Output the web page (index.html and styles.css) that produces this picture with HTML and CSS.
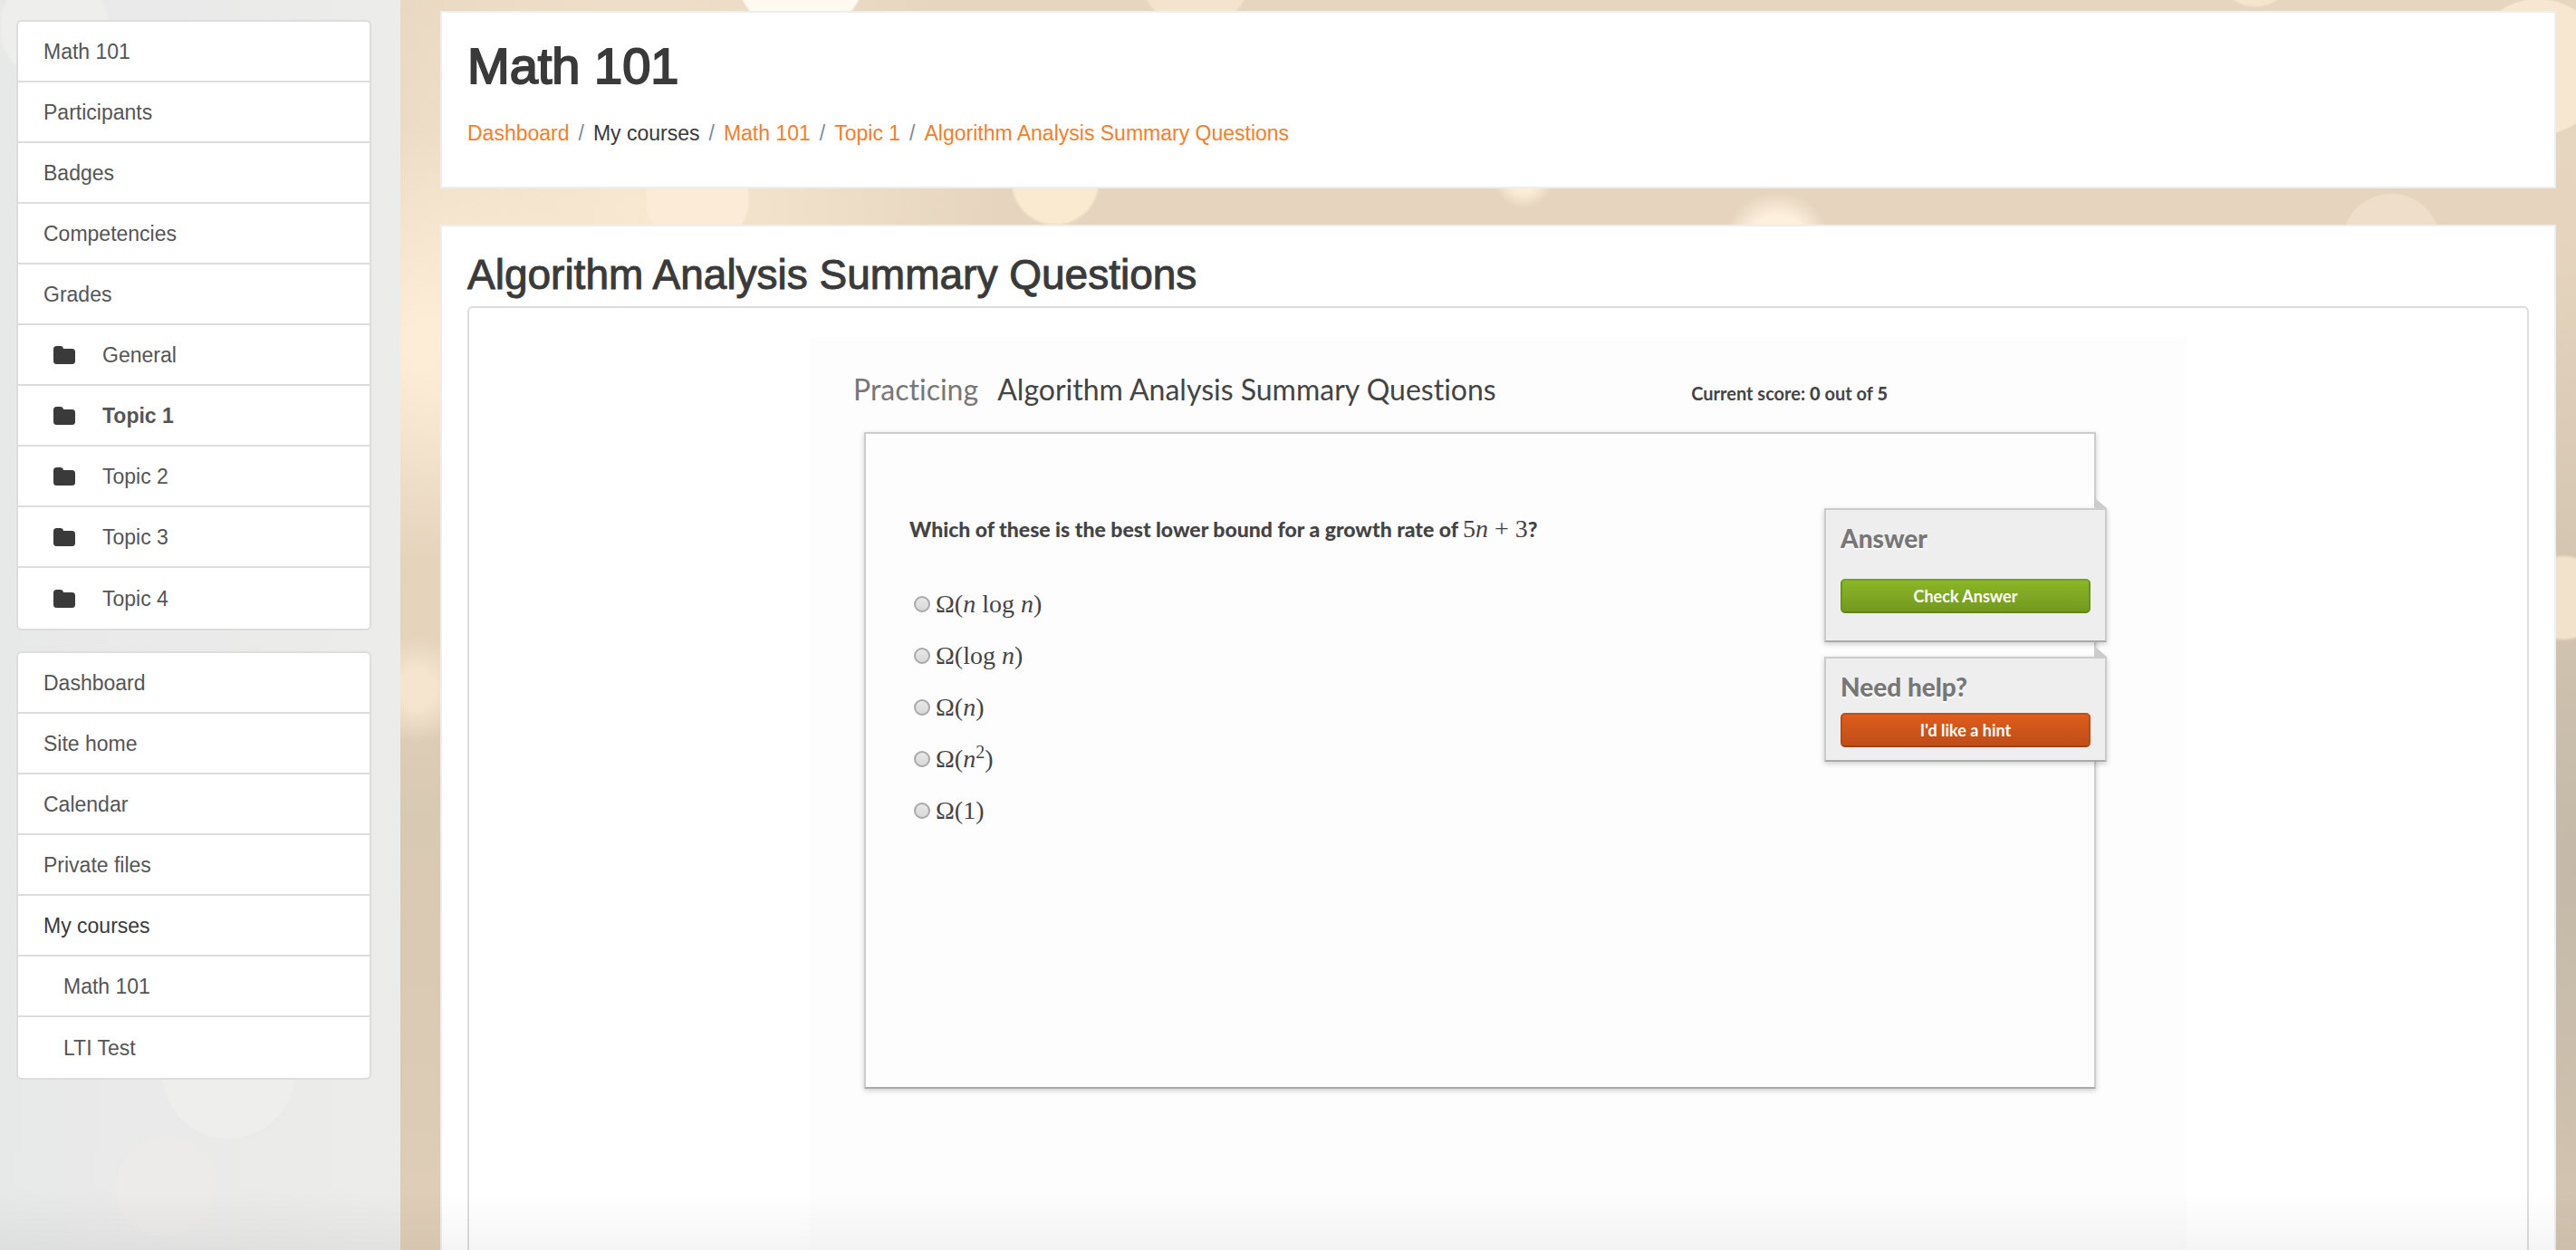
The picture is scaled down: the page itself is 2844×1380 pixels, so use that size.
FILE: index.html
```html
<!DOCTYPE html>
<html lang="en">
<head>
    <meta charset="UTF-8">
    <meta name="viewport" content="width=device-width, initial-scale=1.0">
    <title>Algorithm Analysis Summary Questions</title>
    <link rel="stylesheet" href="styles.css">
</head>
<body>
    <svg class="sprite" aria-hidden="true">
        <symbol id="folder" viewBox="0 0 24 20">
            <path d="M3.500 0h4A3.500 3.500 0 0 1 11 3h9.500A3.500 3.500 0 0 1 24 6.500v10a3.500 3.500 0 0 1-3.500 3.500h-17A3.500 3.500 0 0 1 0 16.500v-13A3.500 3.500 0 0 1 3.500 0z"/>
        </symbol>
    </svg>

    <!-- Nav drawer -->
    <aside class="drawer">
        <nav class="list-group" aria-label="Course">
            <a href="#">Math 101</a>
            <a href="#">Participants</a>
            <a href="#">Badges</a>
            <a href="#">Competencies</a>
            <a href="#">Grades</a>
            <a href="#" class="section"><svg class="icon"><use href="#folder"/></svg>General</a>
            <a href="#" class="section active"><svg class="icon"><use href="#folder"/></svg>Topic 1</a>
            <a href="#" class="section"><svg class="icon"><use href="#folder"/></svg>Topic 2</a>
            <a href="#" class="section"><svg class="icon"><use href="#folder"/></svg>Topic 3</a>
            <a href="#" class="section"><svg class="icon"><use href="#folder"/></svg>Topic 4</a>
        </nav>
        <nav class="list-group" aria-label="Site">
            <a href="#">Dashboard</a>
            <a href="#">Site home</a>
            <a href="#">Calendar</a>
            <a href="#">Private files</a>
            <span>My courses</span>
            <a href="#" class="indent">Math 101</a>
            <a href="#" class="indent">LTI Test</a>
        </nav>
    </aside>

    <div class="page">
        <header class="card page-header">
            <h1>Math 101</h1>
            <ol class="breadcrumb">
                <li><a href="#">Dashboard</a></li>
                <li>My courses</li>
                <li><a href="#">Math 101</a></li>
                <li><a href="#">Topic 1</a></li>
                <li><a href="#">Algorithm Analysis Summary Questions</a></li>
            </ol>
        </header>

        <main class="card content">
            <h2>Algorithm Analysis Summary Questions</h2>
            <div class="tool-frame">
                <form class="exercise" action="#">
                    <div class="exercise-head">
                        <p class="exercise-title"><span>Practicing</span> Algorithm Analysis Summary Questions</p>
                        <p class="score">Current score: <b>0</b> out of <b>5</b></p>
                    </div>

                    <div class="workarea">
                        <fieldset class="question">
                            <legend>Which of these is the best lower bound for a growth rate of <span class="math">5<i>n</i> + 3</span>?</legend>
                            <label><input type="radio" name="solution"><span class="math">Ω(<i>n</i> log <i>n</i>)</span></label>
                            <label><input type="radio" name="solution"><span class="math">Ω(log <i>n</i>)</span></label>
                            <label><input type="radio" name="solution"><span class="math">Ω(<i>n</i>)</span></label>
                            <label><input type="radio" name="solution"><span class="math">Ω(<i>n</i><sup>2</sup>)</span></label>
                            <label><input type="radio" name="solution"><span class="math">Ω(1)</span></label>
                        </fieldset>

                        <div class="side">
                            <section class="info-box answer">
                                <h3>Answer</h3>
                                <button type="submit" class="btn green">Check Answer</button>
                            </section>
                            <section class="info-box">
                                <h3>Need help?</h3>
                                <button type="button" class="btn orange">I'd like a hint</button>
                            </section>
                        </div>
                    </div>
                </form>
            </div>
        </main>
    </div>
</body>
</html>
```
FILE: styles.css
```css
* {
    box-sizing: border-box;
}

body {
    display: flex;
    min-height: 100vh;
    margin: 0;
    font-family: "Liberation Sans", Arial, sans-serif;
    font-size: 23px;
    line-height: 34px;
    color: #3a3a3a;
    /* bokeh lights over a sand gradient */
    background:
        radial-gradient(circle at 884px -32px, #fffaf0 70px, transparent 73px),
        radial-gradient(circle at 1320px -30px, #f4e3cd 60px, transparent 63px),
        radial-gradient(circle at 2490px -34px, #f5e5cb 40px, transparent 43px),
        radial-gradient(circle at 2802px 74px, #f8e7d0 74px, transparent 76px),
        radial-gradient(circle at 2640px 268px, #efdec9 53px, transparent 55px),
        radial-gradient(circle at 2830px 660px, #f3e2cb 44px, transparent 48px),
        radial-gradient(circle at 1165px 200px, #faebd0 46px, transparent 50px),
        radial-gradient(circle at 1682px 196px, #fbeed8 16px, transparent 34px),
        radial-gradient(circle at 1962px 272px, #fdf0dd 34px, transparent 60px),
        radial-gradient(circle at 770px 220px, #fcecd7 55px, transparent 58px),
        radial-gradient(circle at 470px 380px, #fdedd6 20px, transparent 240px),
        radial-gradient(circle at 460px 760px, #f5e4ce 20px, transparent 60px),
        radial-gradient(circle at 700px 230px, #f8e8d2, transparent 400px),
        radial-gradient(ellipse 500px 700px at 2844px 960px, #c4b9a8, transparent),
        linear-gradient(#e6d5bf, #e5d3bc 50%, #d8c9b2 65%, #dccbb5 90%, #e0ceb8);
}

/* soft shade along the bottom of the window */
body::after {
    content: "";
    position: fixed;
    inset: auto 0 0;
    height: 64px;
    background: linear-gradient(transparent, rgba(0, 0, 0, .04));
    pointer-events: none;
}

a {
    color: #f0802c;
    text-decoration: none;
}

h1, h2, h3, p {
    margin: 0;
}

.sprite {
    position: absolute;
    width: 0;
    height: 0;
}

/* Drawer */
.drawer {
    flex: 0 0 442px;
    padding: 22px 32px 22px 18px;
    background:
        radial-gradient(circle at 252px 1184px, #eeeeec 72px, transparent 74px),
        radial-gradient(circle at 183px 1310px, #ecebea 54px, transparent 56px),
        radial-gradient(circle at 60px 30px, #eeeeec 58px, transparent 62px),
        linear-gradient(90deg, #e7e9e8, #ececea);
}

.list-group {
    margin-bottom: 23px;
    border: 2px solid #ddd;
    border-radius: 6px;
    background: #fff;
}

.list-group > * {
    display: flex;
    align-items: center;
    height: 67px;
    padding: 0 28px;
    border-bottom: 2px solid #ddd;
    color: #3a3a3a;
}

.list-group > a {
    color: #555;
}

.list-group > :last-child {
    border-bottom: 0;
}

.list-group .section {
    padding-left: 39px;
}

.list-group .active {
    font-weight: bold;
}

.list-group .indent {
    padding-left: 50px;
}

.icon {
    width: 24px;
    height: 20px;
    margin-right: 30px;
    fill: #3a3a3a;
}

/* Page */
.page {
    flex: 1;
    display: flex;
    flex-direction: column;
    gap: 40px;
    padding: 12px 22px 0 44px;
}

.card {
    padding: 28px;
    border: 2px solid #eceeef;
    background: #fff;
}

.page-header {
    height: 196px;
}

h1 {
    font-size: 56px;
    font-weight: normal;
    line-height: 62px;
    -webkit-text-stroke: 2px;
}

h2 {
    font-size: 46px;
    font-weight: normal;
    line-height: 50px;
    -webkit-text-stroke: 1px;
}

.breadcrumb {
    display: flex;
    flex-wrap: wrap;
    margin: 26px 0 0;
    padding: 0;
    list-style: none;
}

.breadcrumb li + li::before {
    content: "/";
    padding: 0 10px;
    color: #818a91;
}

.content {
    flex: 1;
    display: flex;
    flex-direction: column;
    padding-bottom: 0;
    border-bottom: 0;
}

.tool-frame {
    flex: 1;
    display: flex;
    justify-content: center;
    margin-top: 10px;
    padding: 32px 32px 0;
    border: 2px solid #ddd;
    border-bottom: 0;
    border-radius: 6px 6px 0 0;
}

/* Exercise */
.exercise {
    flex: 0 1 1520px;
    padding: 38px 100px 40px 60px;
    background: #fdfdfd;
    font-family: Lato, sans-serif;
    font-variant-ligatures: none;
    color: #444;
}

.exercise-head {
    display: flex;
    align-items: baseline;
    justify-content: space-between;
    padding-right: 230px;
    margin-left: -12px;
}

.exercise-title {
    font-size: 32px;
    line-height: 40px;
}

.exercise-title span {
    margin-right: 14px;
    color: #777;
}

.score {
    font-size: 20px;
    font-weight: bold;
}

.workarea {
    display: flex;
    justify-content: space-between;
    min-height: 725px;
    margin-top: 26px;
    padding: 82px 0 40px 48px;
    border: 2px solid #ccc;
    border-bottom-color: #aaa;
    box-shadow: 0 2px 6px rgba(0, 0, 0, .2);
}

.question {
    display: flex;
    flex-direction: column;
    gap: 17px;
    min-width: 0;
    margin: 0;
    padding: 0;
    border: 0;
}

.question legend {
    margin-bottom: 40px;
    padding: 0;
    font-size: 23px;
    line-height: 46px;
    font-weight: 900;
}

.question label {
    display: flex;
    align-items: center;
    gap: 6px;
    height: 40px;
}

.question input {
    appearance: none;
    width: 18px;
    height: 18px;
    margin: 0 0 0 5px;
    border: 2px solid #a9a9a9;
    border-radius: 50%;
    background: linear-gradient(#e8e8e8, #d8d8d8);
}

.math {
    font-family: "Liberation Serif", "Times New Roman", serif;
    font-size: 28px;
    font-weight: normal;
    line-height: 36px;
}

.math sup {
    font-size: 20px;
    line-height: 0;
}

/* Answer and hint boxes hang over the right edge of the work area */
.side {
    display: flex;
    flex-direction: column;
    gap: 16px;
    width: 312px;
    margin-right: -14px;
}

.info-box {
    position: relative;
    padding: 14px 16px;
    border: 2px solid #ccc;
    border-bottom-color: #aaa;
    background: #eee;
    box-shadow: 0 2px 6px rgba(0, 0, 0, .2);
}

.info-box::before {
    content: "";
    position: absolute;
    top: -14px;
    right: -2px;
    width: 14px;
    height: 12px;
    background: #ccc;
    clip-path: polygon(0 0, 100% 100%, 0 100%);
}

.info-box h3 {
    margin-bottom: 12px;
    font-size: 28px;
    font-weight: 900;
    line-height: 34px;
    color: #777;
    text-shadow: 0 2px 0 #fff;
}

.answer {
    padding-bottom: 30px;
}

.answer h3 {
    margin-bottom: 28px;
}

.btn {
    display: block;
    width: 100%;
    height: 38px;
    padding: 0;
    border: 2px solid;
    border-radius: 5px;
    font: bold 18px Lato, sans-serif;
    color: #fff;
}

.green {
    border-color: #76a020 #6b931c #618418;
    background: linear-gradient(#8ab627, #73991f);
}

.orange {
    border-color: #c24f17 #b84b16 #a04012;
    background: linear-gradient(#df5c1c, #be4e18);
}
```
